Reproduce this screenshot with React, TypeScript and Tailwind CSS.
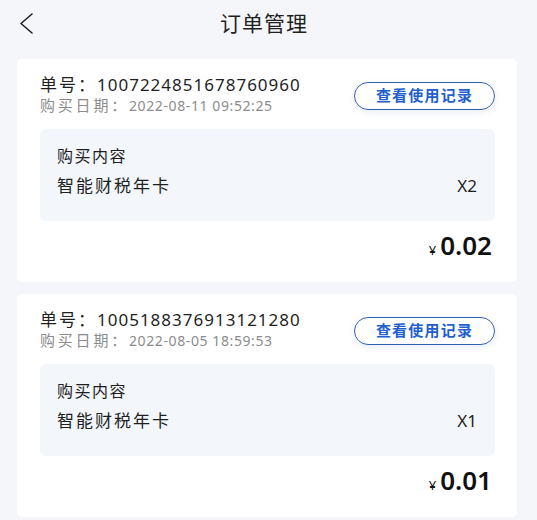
import React from 'react';

type Order = {
  no: string;
  date: string;
  name: string;
  qty: number;
  price: string;
};

const orders: Order[] = [
  { no: '1007224851678760960', date: '2022-08-11 09:52:25', name: '智能财税年卡', qty: 2, price: '0.02' },
  { no: '1005188376913121280', date: '2022-08-05 18:59:53', name: '智能财税年卡', qty: 1, price: '0.01' },
];

const OrderCard = ({ order }: { order: Order }) => {
  return (
    <div className="bg-white rounded-[5px] pl-[23px] pr-[22px] pt-[16px] pb-[21px]">
      <div className="flex items-center justify-between">
        <div className="flex flex-col">
          <span className="text-[17px] leading-[20px] text-[#1f1f1f] whitespace-nowrap">
            <span className="tracking-[2px]">单号：</span>
            <span className="tracking-[1px]">{order.no}</span>
          </span>
          <span className="leading-[20px] text-[#8c8c8c] whitespace-nowrap">
            <span className="text-[15px] tracking-[2.8px]">购买日期：</span>
            <span className="text-[14px] tracking-[0.6px]">{order.date}</span>
          </span>
        </div>
        <button className="w-[141px] h-[28px] rounded-full border border-[#3161b3] text-[#1f5fcf] text-[15px] tracking-[1.2px] font-bold flex items-center justify-center shadow-[0_2px_6px_rgba(60,100,180,0.12)]">
          查看使用记录
        </button>
      </div>

      <div className="mt-[13px] bg-[#f3f6fb] rounded-[6px] pl-[17px] pr-[18px] pt-[16px] pb-[24px] flex flex-col gap-[8px] leading-[22px] text-[#1f1f1f]">
        <span className="text-[16px] tracking-[1.5px]">购买内容</span>
        <div className="flex justify-between text-[17px]">
          <span className="tracking-[2px]">{order.name}</span>
          <span>X{order.qty}</span>
        </div>
      </div>

      <div className="mt-[8px] flex justify-end items-baseline pr-[3px] text-[#111]">
        <span className="text-[13px] mr-[4px]">¥</span>
        <span className="text-[26px] leading-[32px] font-semibold">{order.price}</span>
      </div>
    </div>
  );
};

export default function App() {
  return (
    <div
      className="min-h-[520px] w-[537px] bg-[#f4f6fa] pl-[17px] pr-[20px]"
      style={{ fontFamily: '"Noto Sans", "Noto Sans CJK SC", sans-serif' }}
    >
      <div className="h-[47px] relative flex items-center justify-center">
        <svg className="absolute left-[0px] top-[12px]" width="18" height="22" viewBox="0 0 18 22" fill="none">
          <path d="M15 2 L4 11.5 L15 21" stroke="#222" strokeWidth="1.6" strokeLinecap="round" strokeLinejoin="round" />
        </svg>
        <span className="text-[21px] tracking-[1px] text-[#1f1f1f] mr-[6px]">订单管理</span>
      </div>
      <div className="pt-[12px] pb-[6px] flex flex-col gap-[12px]">
        {orders.map((o) => (
          <OrderCard key={o.no} order={o} />
        ))}
      </div>
    </div>
  );
}
